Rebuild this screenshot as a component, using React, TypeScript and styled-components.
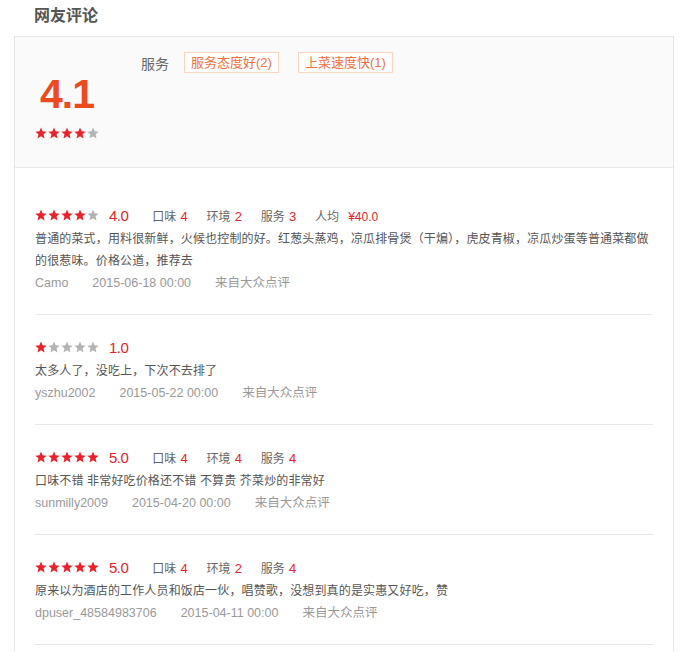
import styled, {createGlobalStyle} from 'styled-components';

type SubScore = {
	label: string;
	value: string;
};

type Review = {
	user: string;
	date: string;
	rating: number;
	subs: SubScore[];
	content: string;
};

const reviews: Review[] = [
	{
		user: 'Camo',
		date: '2015-06-18 00:00',
		rating: 4,
		subs: [
			{label: '口味', value: '4'},
			{label: '环境', value: '2'},
			{label: '服务', value: '3'},
			{label: '人均', value: '¥40.0'},
		],
		content:
			'普通的菜式，用料很新鲜，火候也控制的好。红葱头蒸鸡，凉瓜排骨煲（干煸），虎皮青椒，凉瓜炒蛋等普通菜都做的很惹味。价格公道，推荐去',
	},
	{
		user: 'yszhu2002',
		date: '2015-05-22 00:00',
		rating: 1,
		subs: [],
		content: '太多人了，没吃上，下次不去排了',
	},
	{
		user: 'sunmilly2009',
		date: '2015-04-20 00:00',
		rating: 5,
		subs: [
			{label: '口味', value: '4'},
			{label: '环境', value: '4'},
			{label: '服务', value: '4'},
		],
		content: '口味不错 非常好吃价格还不错 不算贵 芥菜炒的非常好',
	},
	{
		user: 'dpuser_48584983706',
		date: '2015-04-11 00:00',
		rating: 5,
		subs: [
			{label: '口味', value: '4'},
			{label: '环境', value: '2'},
			{label: '服务', value: '4'},
		],
		content: '原来以为酒店的工作人员和饭店一伙，唱赞歌，没想到真的是实惠又好吃，赞',
	},
];

const tags = ['服务态度好(2)', '上菜速度快(1)'];

function Stars({count}: {count: number}) {
	return (
		<StarRow>
			{[0, 1, 2, 3, 4].map(i => (
				<svg key={i} width="12" height="12" viewBox="0 0 24 24">
					<polygon
						points="12,1 15.1,8.6 23.4,9.3 17.1,14.7 19,22.8 12,18.5 5,22.8 6.9,14.7 0.6,9.3 8.9,8.6"
						fill={i < count ? '#e8232c' : '#b3b3b3'}
					/>
				</svg>
			))}
		</StarRow>
	);
}

function App() {
	return (
		<>
			<GlobalStyle />
			<Page>
				<Title>网友评论</Title>
				<Box>
					<Summary>
						<ScoreColumn>
							<BigScore>4.1</BigScore>
							<Stars count={4} />
						</ScoreColumn>
						<TagRow>
							<TagLabel>服务</TagLabel>
							{tags.map(tag => (
								<Tag key={tag}>{tag}</Tag>
							))}
						</TagRow>
					</Summary>
					<List>
						{reviews.map(review => (
							<Item key={review.user}>
								<RatingRow>
									<Stars count={review.rating} />
									<Score>{review.rating.toFixed(1)}</Score>
									{review.subs.map(sub => (
										<Sub key={sub.label}>
											{sub.label}
											<SubValue $price={sub.value.startsWith('¥')}>
												{sub.value}
											</SubValue>
										</Sub>
									))}
								</RatingRow>
								<Content>{review.content}</Content>
								<Meta>
									<span>{review.user}</span>
									<span>{review.date}</span>
									<span>来自大众点评</span>
								</Meta>
							</Item>
						))}
					</List>
				</Box>
			</Page>
		</>
	);
}

export default App;

const GlobalStyle = createGlobalStyle`
	body {
		margin: 0;
		background: #fff;
		font-family: "Liberation Sans", "Noto Sans CJK SC", sans-serif;
	}
`;

const Page = styled.div`
	padding: 0 14px;
`;

const Title = styled.h2`
	margin: 0 0 4px 20px;
	font-size: 16px;
	line-height: 32px;
	font-weight: bold;
	color: #555;
`;

const Box = styled.div`
	border: 1px solid #e5e5e5;
	padding-bottom: 20px;
`;

const Summary = styled.div`
	display: flex;
	align-items: flex-start;
	background: #fafafa;
	border-bottom: 1px solid #e8e8e8;
	padding: 15px 0 28px 20px;
`;

const ScoreColumn = styled.div`
	display: flex;
	flex-direction: column;
	align-items: center;
	width: 64px;
	margin-top: 17px;
`;

const BigScore = styled.div`
	font-size: 41px;
	line-height: 50px;
	font-weight: bold;
	letter-spacing: -1px;
	color: #eb4b1f;
	margin-bottom: 8px;
`;

const StarRow = styled.span`
	display: inline-flex;
	gap: 1px;
	height: 12px;

	svg {
		display: block;
	}
`;

const TagRow = styled.div`
	display: flex;
	align-items: center;
	margin-left: 42px;
	gap: 19px;
`;

const TagLabel = styled.span`
	font-size: 14px;
	color: #666;
	margin-right: -4px;
`;

const Tag = styled.span`
	display: inline-block;
	height: 19px;
	line-height: 19px;
	padding: 0 6px;
	border: 1px solid #fbd5c0;
	background: #fff;
	color: #f0703c;
	font-size: 13px;
`;

const List = styled.ul`
	list-style: none;
	margin: 0;
	padding: 15px 20px 0;
`;

const Item = styled.li`
	padding: 19px 0 20px;
	border-bottom: 1px solid #e8e8e8;
`;

const RatingRow = styled.div`
	display: flex;
	align-items: center;
	height: 26px;
`;

const Score = styled.span`
	margin: 0 24px 0 10px;
	font-size: 15px;
	letter-spacing: -0.5px;
	color: #e4242a;
`;

const Sub = styled.span`
	font-size: 12px;
	color: #666;
	margin-right: 19px;
`;

const SubValue = styled.span<{$price: boolean}>`
	margin-left: ${props => (props.$price ? '9px' : '4px')};
	font-size: ${props => (props.$price ? '12px' : '13px')};
	color: #e4242a;
`;

const Content = styled.p`
	margin: 0;
	font-size: 12px;
	line-height: 22px;
	letter-spacing: 0.15px;
	color: #555;
`;

const Meta = styled.div`
	display: flex;
	gap: 24px;
	font-size: 12.5px;
	line-height: 22px;
	color: #999;
`;
